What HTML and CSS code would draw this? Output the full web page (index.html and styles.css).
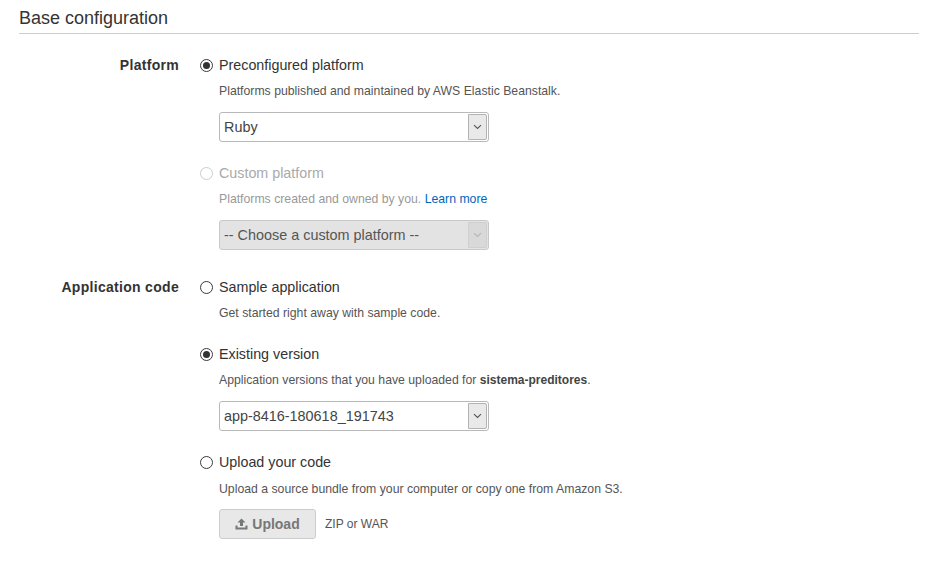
FILE: index.html
```html
<!DOCTYPE html>
<html>
<head>
<meta charset="utf-8">
<link rel="stylesheet" href="styles.css">
</head>
<body>
<div class="page">
  <h2 class="section-title">Base configuration</h2>
  <div class="form">
    <div class="row">
      <div class="row-label">Platform</div>
      <div class="row-body">
        <div class="option">
          <label class="radio-line"><span class="radio checked"></span><span>Preconfigured platform</span></label>
          <div class="desc">Platforms published and maintained by AWS Elastic Beanstalk.</div>
          <div class="select"><span class="select-text">Ruby</span><span class="select-arrow"><svg width="9" height="6" viewBox="0 0 9 6"><path d="M1 1.2 L4.5 4.5 L8 1.2" fill="none" stroke="#555" stroke-width="1.1"/></svg></span></div>
        </div>
        <div class="option disabled">
          <label class="radio-line"><span class="radio"></span><span>Custom platform</span></label>
          <div class="desc">Platforms created and owned by you. <a class="link" href="#">Learn more</a></div>
          <div class="select select-disabled"><span class="select-text">-- Choose a custom platform --</span><span class="select-arrow"><svg width="9" height="6" viewBox="0 0 9 6"><path d="M1 1.2 L4.5 4.5 L8 1.2" fill="none" stroke="#b5b5b5" stroke-width="1.1"/></svg></span></div>
        </div>
      </div>
    </div>
    <div class="row row-app">
      <div class="row-label">Application code</div>
      <div class="row-body">
        <div class="option option-plain">
          <label class="radio-line"><span class="radio"></span><span>Sample application</span></label>
          <div class="desc">Get started right away with sample code.</div>
        </div>
        <div class="option">
          <label class="radio-line"><span class="radio checked"></span><span>Existing version</span></label>
          <div class="desc">Application versions that you have uploaded for <b>sistema-preditores</b>.</div>
          <div class="select"><span class="select-text">app-8416-180618_191743</span><span class="select-arrow"><svg width="9" height="6" viewBox="0 0 9 6"><path d="M1 1.2 L4.5 4.5 L8 1.2" fill="none" stroke="#555" stroke-width="1.1"/></svg></span></div>
        </div>
        <div class="option">
          <label class="radio-line"><span class="radio"></span><span>Upload your code</span></label>
          <div class="desc desc-upload">Upload a source bundle from your computer or copy one from Amazon S3.</div>
          <div class="upload-line">
            <span class="upload-btn"><svg class="upload-icon" width="13" height="12" viewBox="0 0 13 12"><path d="M6.5 0.5 L2.5 4.5 H5 V8 H8 V4.5 H10.5 Z" fill="#777"/><path d="M0.5 7.5 V11.5 H12.5 V7.5 H10.5 V9.5 H2.5 V7.5 Z" fill="#777"/></svg>Upload</span>
            <span class="upload-hint">ZIP or WAR</span>
          </div>
        </div>
      </div>
    </div>
  </div>
</div>
</body>
</html>
```
FILE: styles.css
```css
html, body {
  margin: 0;
  padding: 0;
  background: #fff;
}
body {
  font-family: "Liberation Sans", Arial, sans-serif;
  color: #333;
}
.page {
  padding: 0 26px 0 19px;
}
.section-title {
  margin: 0;
  padding-top: 7px;
  height: 26px;
  font-size: 18px;
  font-weight: normal;
  line-height: 22px;
  color: #333;
  border-bottom: 1px solid #ccc;
}
.form {
  padding-top: 21px;
}
.row {
  display: flex;
}
.row-app {
  margin-top: 27px;
}
.row-label {
  width: 160px;
  flex: none;
  text-align: right;
  font-weight: bold;
  font-size: 14px;
  letter-spacing: 0.3px;
  line-height: 20px;
  color: #333;
}
.row-body {
  margin-left: 21px;
  display: flex;
  flex-direction: column;
  gap: 21px;
}
.option-plain {
  margin-bottom: 2px;
}
.radio-line {
  display: flex;
  align-items: center;
  height: 20px;
  font-size: 14.3px;
  color: #333;
}
.radio {
  box-sizing: border-box;
  width: 13px;
  height: 13px;
  border: 1px solid #3a3a3a;
  border-radius: 50%;
  margin-right: 6px;
  display: flex;
  align-items: center;
  justify-content: center;
  background: #fff;
}
.radio.checked::after {
  content: "";
  width: 7px;
  height: 7px;
  border-radius: 50%;
  background: #333;
}
.desc {
  margin: 8px 0 0 19px;
  font-size: 12.25px;
  line-height: 16px;
  color: #555;
}
.desc b {
  color: #444;
  font-size: 12px;
}
.desc-upload {
  margin-top: 9px;
}
.link {
  color: #0066c0;
  text-decoration: none;
}
.disabled .radio-line {
  color: #aaa;
}
.disabled .radio {
  border-color: #ccc;
}
.disabled .desc {
  color: #999;
}
.select {
  box-sizing: border-box;
  margin: 13px 0 0 19px;
  width: 270px;
  height: 30px;
  border: 1px solid #b9b9b9;
  border-radius: 3px;
  display: flex;
  align-items: stretch;
  background: #fff;
  overflow: hidden;
}
.select-text {
  flex: 1;
  padding-left: 4px;
  font-size: 14.4px;
  line-height: 28px;
  color: #444;
}
.select-arrow {
  width: 17px;
  margin: 1px;
  border: 1px solid #b3b3b3;
  border-radius: 0 2px 2px 0;
  background: #e9e9e9;
  display: flex;
  align-items: center;
  justify-content: center;
}
.select-disabled {
  background: #e3e3e3;
  border-color: #c9c9c9;
}
.select-disabled .select-text {
  color: #555;
}
.select-disabled .select-arrow {
  background: #d9d9d9;
  border-color: #cfcfcf;
}
.upload-line {
  margin: 12px 0 0 19px;
  display: flex;
  align-items: center;
}
.upload-btn {
  box-sizing: border-box;
  width: 97px;
  height: 30px;
  border: 1px solid #ccc;
  border-radius: 3px;
  background: #e8e8e8;
  display: flex;
  align-items: center;
  justify-content: center;
  font-size: 14px;
  font-weight: bold;
  color: #777;
}
.upload-icon {
  margin-right: 4px;
}
.upload-hint {
  margin-left: 9px;
  font-size: 12px;
  color: #555;
}
```
